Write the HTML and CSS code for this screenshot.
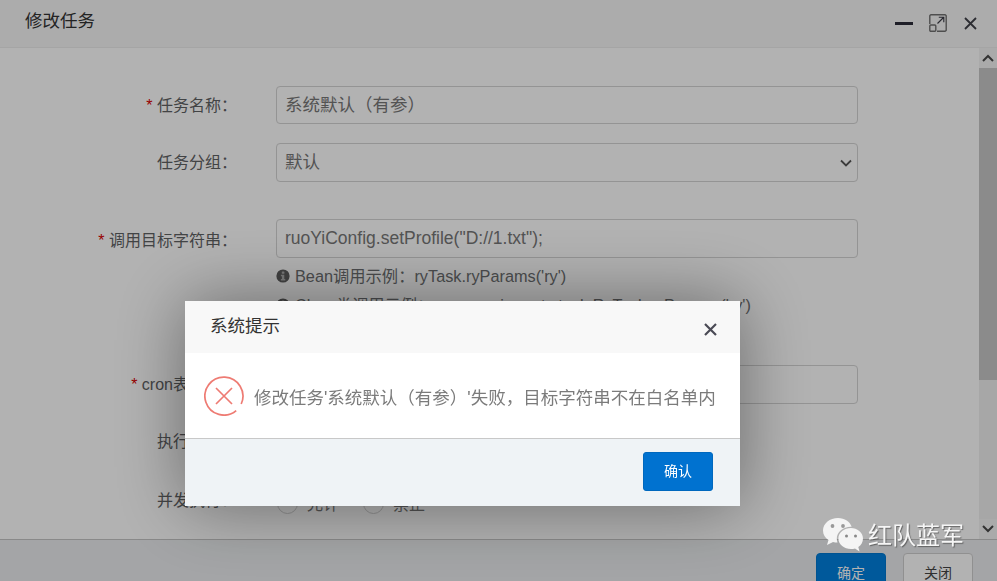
FILE: index.html
```html
<!DOCTYPE html>
<html lang="zh-CN">
<head>
<meta charset="utf-8">
<title>修改任务</title>
<link rel="stylesheet" href="styles.css">
</head>
<body>
<div class="window">
  <header class="win-head">
    <h1 class="win-title">修改任务</h1>
    <div class="win-tools">
      <span class="tool-min"></span>
      <svg class="tool-max" width="18" height="18" viewBox="0 0 18 18" fill="none" stroke="#707070" stroke-width="1.400"><path d="M.8 10V2A1.200 1.200 0 0 1 2 .8h14A1.200 1.200 0 0 1 17.200 2v14a1.200 1.200 0 0 1-1.200 1.200H8"/><rect x=".8" y="11" width="6" height="6.200" rx="1"/><path d="M8.500 9.500 14.500 3.500M9.800 3.300h5v5" stroke="#3a3a44" stroke-width="1.100"/></svg>
      <svg class="tool-close" width="13" height="13" viewBox="0 0 13 13" stroke="#3f4048" stroke-width="1.800"><path d="M1 1l11 11M12 1 1 12"/></svg>
    </div>
  </header>
  <div class="win-main">
    <form class="form">
      <div class="row row-name"><label class="lbl"><i class="req">*</i> 任务名称：</label><div class="ctl"><div class="input">系统默认（有参）</div></div></div>
      <div class="row row-group"><label class="lbl">任务分组：</label><div class="ctl"><div class="input select">默认<svg class="caret" width="14" height="9" viewBox="0 0 14 9" fill="none" stroke="#555" stroke-width="1.800"><path d="M2 1.500 7 6.500 12 1.500"/></svg></div></div></div>
      <div class="row row-target"><label class="lbl"><i class="req">*</i> 调用目标字符串：</label>
        <div class="ctl">
          <div class="input select">ruoYiConfig.setProfile("D://1.txt");</div>
          <p class="help"><svg class="info" width="14" height="14" viewBox="0 0 14 14"><circle cx="7" cy="7" r="6.600" fill="#5f5f5f"/><rect x="5.800" y="2.400" width="2.600" height="2.400" rx=".5" fill="#b0b0b0"/><path d="M4.900 5.800h3.400v4.300h1v1.400H4.900v-1.400h1V7.200h-1z" fill="#b0b0b0"/></svg>Bean调用示例：ryTask.ryParams('ry')</p>
          <p class="help"><svg class="info" width="14" height="14" viewBox="0 0 14 14"><circle cx="7" cy="7" r="6.600" fill="#5f5f5f"/><rect x="5.800" y="2.400" width="2.600" height="2.400" rx=".5" fill="#b0b0b0"/><path d="M4.900 5.800h3.400v4.300h1v1.400H4.900v-1.400h1V7.200h-1z" fill="#b0b0b0"/></svg>Class类调用示例：com.ruoyi.quartz.task.RyTask.ryParams('ry')</p>
        </div>
      </div>
      <div class="row row-cron"><label class="lbl"><i class="req">*</i> cron表达式：</label><div class="ctl"><div class="input select"></div></div></div>
      <div class="row row-policy"><label class="lbl">执行策略：</label><div class="ctl"></div></div>
      <div class="row row-conc"><label class="lbl">并发执行：</label>
        <div class="ctl radios">
          <span class="radio"></span><span class="radio-text">允许</span>
          <span class="radio"></span><span class="radio-text">禁止</span>
        </div>
      </div>
    </form>
    <div class="scrollbar">
      <div class="sb-btn"><svg width="12" height="8" viewBox="0 0 12 8" fill="none" stroke="#4a4a4a" stroke-width="2"><path d="M1 7l5-5 5 5"/></svg></div>
      <div class="sb-thumb"></div>
      <div class="sb-track"></div>
      <div class="sb-btn sb-down"><svg width="12" height="8" viewBox="0 0 12 8" fill="none" stroke="#4a4a4a" stroke-width="2"><path d="M1 1l5 5 5-5"/></svg></div>
    </div>
  </div>
  <footer class="win-foot">
    <button class="btn btn-primary" type="button">确定</button>
    <button class="btn btn-default" type="button">关闭</button>
  </footer>
</div>

<div class="overlay">
  <div class="dialog">
    <div class="dlg-head">
      <h2 class="dlg-title">系统提示</h2>
      <svg class="dlg-close" width="13" height="13" viewBox="0 0 13 13" stroke="#4a4a55" stroke-width="2.200"><path d="M1 1l11 11M12 1 1 12"/></svg>
    </div>
    <div class="dlg-body">
      <svg class="err" width="40" height="40" viewBox="0 0 40 40" fill="none" stroke="#ee7b73" stroke-width="1.700"><path d="M32.200 34.600A19 19 0 1 1 37.200 28"/><path d="M12 12l16 16M28 12 12 28"/></svg>
      <span class="dlg-msg">修改任务'系统默认（有参）'失败，目标字符串不在白名单内</span>
    </div>
    <div class="dlg-foot"><button class="dlg-ok" type="button">确认</button></div>
  </div>
</div>

<div class="mark">
  <svg class="mark-icon" width="40" height="35" viewBox="0 0 40 35"><path d="M15 0C7 0 0 5.300 0 12.500c0 4 2.200 7.400 5.500 9.600L4 27l6-3c1.500.4 3 .6 4.500.6-.5-1.400-.7-2.700-.7-4 0-6.800 6.400-11.900 14-11.900h.8C27.200 3.700 21.600 0 15 0z" fill="#f4f4f4"/><path d="M40 20.500c0-6-6-10.500-12-10.500-6.700 0-12.600 4.500-12.600 10.500S21.300 31 28 31c1.400 0 2.800-.2 4-.6l4.500 3-1.200-4.300c2.800-2 4.700-5 4.700-8.600z" fill="#f4f4f4"/><circle cx="9.500" cy="8" r="1.900" fill="#999"/><circle cx="20" cy="8" r="1.900" fill="#999"/><circle cx="23.500" cy="18" r="1.500" fill="#888"/><circle cx="32.500" cy="18" r="1.500" fill="#888"/></svg>
  <span class="mark-text">红队蓝军</span>
</div>
</body>
</html>
```
FILE: styles.css
```css
* { box-sizing: border-box; }
html, body { margin: 0; height: 581px; overflow: hidden; }
body {
  font-family: "Liberation Sans", "Noto Sans CJK SC", sans-serif;
  color: #676a6c;
  background: #fff;
}
.window { display: flex; flex-direction: column; height: 581px; }

.win-head {
  height: 48px;
  flex: none;
  background: #f6f6f6;
  border-bottom: 1px solid #ededed;
  display: flex;
  align-items: flex-start;
  justify-content: space-between;
  padding: 10px 20px 0 25px;
}
.win-title { margin: 0; font-size: 17.5px; line-height: 22px; font-weight: 400; color: #333; }
.win-tools { display: flex; align-items: center; padding-top: 4px; }
.tool-min { width: 18px; height: 3px; background: #2b2b38; margin-right: 16px; }
.tool-max { display: block; margin-right: 17px; }
.tool-close { display: block; }

.win-main { flex: 1; min-height: 0; display: flex; }
.form { flex: 1; min-width: 0; overflow: hidden; padding-top: 38px; }
.row { display: flex; }
.row-group { margin-top: 17px; }
.row-target { margin-top: 36px; }
.row-target .lbl { line-height: 43px; }
.row-cron { margin-top: 53px; }
.row-policy { margin-top: 17px; height: 40px; }
.row-conc { margin-top: 19px; }
.lbl {
  width: 237px;
  flex: none;
  text-align: right;
  font-size: 16px;
  line-height: 40px;
  color: #5f6264;
}
.req { color: #d90000; font-style: normal; font-size: 16px; }
.ctl { width: 582px; margin-left: 39px; flex: none; }
.input {
  height: 38px;
  border: 1px solid #d4d4d4;
  border-radius: 4px;
  padding: 0 8px;
  font-size: 17.5px;
  line-height: 36px;
  color: #777;
  position: relative;
}
.select { height: 39px; }
.caret { position: absolute; right: 4px; top: 15px; }
.help {
  margin: 11px 0 0;
  font-size: 16.3px;
  line-height: 14px;
  color: #6d6f71;
  display: flex;
  align-items: center;
  height: 14px;
  white-space: nowrap;
}
.help + .help { margin-top: 15px; }
.info { margin-right: 5px; flex: none; }
.radios { display: flex; align-items: center; height: 40px; margin-top: 2px; padding-left: 1px; font-size: 16px; color: #777; }
.radio { width: 21px; height: 21px; border: 1px solid #d0d0d0; border-radius: 50%; flex: none; }
.radio-text { margin: 0 24px 0 9px; }

.scrollbar { width: 18px; flex: none; display: flex; flex-direction: column; background: #f0f0f0; }
.sb-btn { height: 20px; display: flex; align-items: center; justify-content: center; flex: none; background: #f4f4f4; }
.sb-thumb { height: 312px; background: #c8c8c8; flex: none; }
.sb-track { flex: 1; }

.win-foot {
  height: 42px;
  flex: none;
  background: #ebedef;
  border-top: 1px solid #c4c4c4;
  display: flex;
  justify-content: flex-end;
  gap: 17px;
  padding: 13px 24px 0 0;
}
.btn {
  width: 70px;
  height: 40px;
  border-radius: 4px;
  font: 14px/38px "Liberation Sans", "Noto Sans CJK SC", sans-serif;
  padding: 0;
}
.btn-primary { background: #0080df; border: 1px solid #0078d0; color: #fff; }
.btn-default { background: #fff; border: 1px solid #cfcfcf; color: #444; }

.overlay {
  position: fixed;
  inset: 0;
  background: rgba(0, 0, 0, .3);
}
.dialog {
  position: absolute;
  left: 185px;
  top: 301px;
  width: 555px;
  height: 205px;
  background: #fff;
  box-shadow: 0 0 70px rgba(0, 0, 0, .42);
  display: flex;
  flex-direction: column;
}
.dlg-head {
  height: 52px;
  flex: none;
  background: #f8f8f8;
  display: flex;
  justify-content: space-between;
  align-items: flex-start;
  padding: 13px 23px 0 25px;
}
.dlg-title { margin: 0; font-size: 17.5px; line-height: 24px; font-weight: 400; color: #333; }
.dlg-close { display: block; margin-top: 9px; }
.dlg-body {
  height: 85px;
  flex: none;
  display: flex;
  align-items: center;
  padding: 0 0 0 19px;
}
.err { flex: none; margin-top: 1px; }
.dlg-msg { margin: 2px 0 0 10px; font-size: 17.5px; color: #7b7b7b; white-space: nowrap; }
.dlg-foot {
  flex: 1;
  background: #eff3f6;
  border-top: 1px solid #c8c8c8;
  display: flex;
  justify-content: flex-end;
  align-items: flex-start;
  padding: 13px 27px 0 0;
}
.dlg-ok {
  width: 70px;
  height: 39px;
  background: #0072d0;
  border: 1px solid #0068be;
  border-radius: 3px;
  color: #fff;
  font: 14px/37px "Liberation Sans", "Noto Sans CJK SC", sans-serif;
  padding: 0;
}

.mark {
  position: fixed;
  left: 823px;
  top: 518px;
  display: flex;
  align-items: flex-start;
  gap: 5px;
}
.mark-icon { display: block; flex: none; }
.mark-text {
  font-size: 24px;
  line-height: 36px;
  color: #f6f6f6;
  text-shadow: 1px 1px 1px rgba(70, 70, 70, .7);
  white-space: nowrap;
}
```
